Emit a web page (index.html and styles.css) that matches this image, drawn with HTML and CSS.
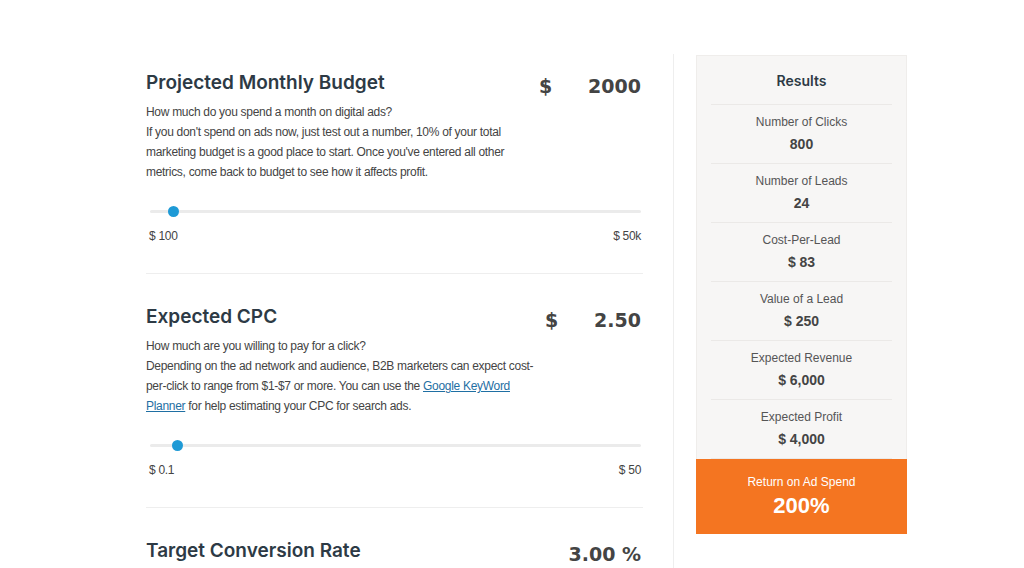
FILE: index.html
```html
<!DOCTYPE html>
<html lang="en">
<head>
<meta charset="UTF-8">
<meta name="viewport" content="width=device-width, initial-scale=1.0">
<title>Ad Spend Calculator</title>
<link rel="stylesheet" href="styles.css">
</head>
<body>

<div class="page">
  <div class="inputs">

    <div class="field">
      <div class="field-head">
        <h2>Projected Monthly Budget</h2>
        <div class="value"><span class="unit">$</span><span class="num">2000</span></div>
      </div>
      <p class="desc">How much do you spend a month on digital ads?<br>
      If you don't spend on ads now, just test out a number, 10% of your total marketing budget is a good place to start. Once you've entered all other metrics, come back to budget to see how it affects profit.</p>
      <div class="slider"><span class="thumb" style="left: 23px"></span></div>
      <div class="range"><span>$ 100</span><span>$ 50k</span></div>
    </div>

    <div class="field">
      <div class="field-head">
        <h2>Expected CPC</h2>
        <div class="value"><span class="unit">$</span><span class="num">2.50</span></div>
      </div>
      <p class="desc">How much are you willing to pay for a click?<br>
      Depending on the ad network and audience, B2B marketers can expect cost-per-click to range from $1-$7 or more. You can use the <a href="#">Google KeyWord Planner</a> for help estimating your CPC for search ads.</p>
      <div class="slider"><span class="thumb" style="left: 27px"></span></div>
      <div class="range"><span>$ 0.1</span><span>$ 50</span></div>
    </div>

    <div class="field last">
      <div class="field-head">
        <h2>Target Conversion Rate</h2>
        <div class="value"><span class="num">3.00 %</span></div>
      </div>
    </div>

  </div>

  <div class="divider"></div>

  <div class="results">
    <h3>Results</h3>
    <div class="row"><div class="label">Number of Clicks</div><div class="amount">800</div></div>
    <div class="row"><div class="label">Number of Leads</div><div class="amount">24</div></div>
    <div class="row"><div class="label">Cost-Per-Lead</div><div class="amount">$ 83</div></div>
    <div class="row"><div class="label">Value of a Lead</div><div class="amount">$ 250</div></div>
    <div class="row"><div class="label">Expected Revenue</div><div class="amount">$ 6,000</div></div>
    <div class="row"><div class="label">Expected Profit</div><div class="amount">$ 4,000</div></div>
    <div class="roas">
      <div class="roas-label">Return on Ad Spend</div>
      <div class="roas-value">200%</div>
    </div>
  </div>
</div>

</body>
</html>
```

FILE: styles.css
```css
body, html {
  margin: 0;
  height: 100%;
  background: #fff;
  overflow: hidden;
}
.page {
  display: flex;
  align-items: flex-start;
  padding-left: 146px;
  padding-top: 54px;
  font-family: "Liberation Sans", Arial, sans-serif;
  color: #444;
}
.inputs {
  width: 497px;
  margin-right: 30px;
}
.field {
  padding: 14px 0 0;
  height: 205px;
  border-bottom: 1px solid #eee;
}
.field + .field {
  padding-top: 28px;
}
.field.last {
  border-bottom: none;
  height: auto;
}
.field-head {
  display: flex;
  justify-content: space-between;
  align-items: center;
  height: 28px;
}
h2 {
  margin: 0;
  font-family: "Inter", sans-serif;
  font-weight: 600;
  font-size: 19px;
  color: #2d3a45;
}
.value {
  display: flex;
  font-family: "DejaVu Sans", sans-serif;
  font-weight: bold;
  font-size: 19px;
  color: #444;
  padding-top: 8px;
  padding-right: 2px;
}
.value .unit {
  margin-right: 36px;
}
.desc {
  margin: 6px 0 0;
  max-width: 392px;
  font-size: 12px;
  letter-spacing: -0.3px;
  line-height: 20px;
  color: #444;
}
.desc a {
  color: #1f6fa3;
}
.slider {
  position: relative;
  height: 3px;
  margin: 28px 2px 0 4px;
  background: #ebebeb;
  border-radius: 2px;
}
.thumb {
  position: absolute;
  top: -4px;
  width: 11px;
  height: 11px;
  margin-left: -5px;
  border-radius: 50%;
  background: #1e9ad6;
}
.range {
  display: flex;
  justify-content: space-between;
  margin-top: 16px;
  padding: 0 2px 0 3px;
  font-size: 12px;
  letter-spacing: -0.3px;
  color: #444;
}
.divider {
  width: 1px;
  align-self: stretch;
  min-height: 520px;
  background: #eee;
  margin-right: 22px;
}
.results {
  width: 211px;
  margin-top: 1px;
  background: #f7f6f5;
  border: 1px solid #efedeb;
  box-sizing: border-box;
  text-align: center;
}
.results h3 {
  margin: 0 14px;
  padding: 16px 0 15px;
  font-family: "Inter", sans-serif;
  font-weight: 600;
  font-size: 14px;
  color: #2d3a45;
  border-bottom: 1px solid #ebe9e7;
}
.row {
  margin: 0 14px;
  height: 59px;
  padding-top: 10px;
  box-sizing: border-box;
  border-bottom: 1px solid #ebe9e7;
}
.row:last-of-type {
  border-bottom: none;
}
.label {
  font-size: 12px;
  color: #555;
  line-height: 14px;
}
.amount {
  margin-top: 7px;
  font-size: 14px;
  font-weight: bold;
  color: #444;
}
.roas {
  background: #f47521;
  color: #fff;
  margin: 0 -1px -1px;
  padding: 16px 0 15px;
}
.roas-label {
  font-size: 12px;
}
.roas-value {
  margin-top: 4px;
  font-size: 22px;
  font-weight: bold;
}
```
